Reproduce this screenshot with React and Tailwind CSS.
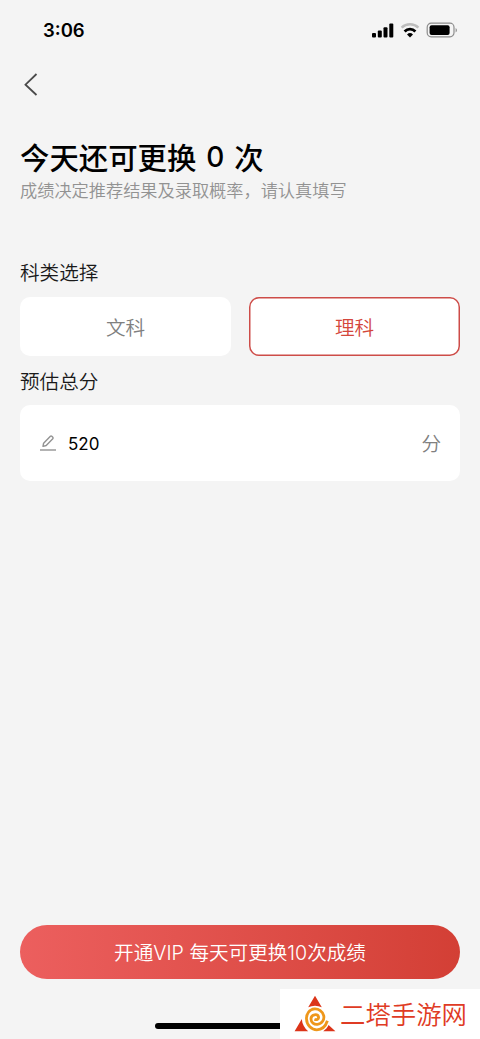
import {useState} from 'react';

// The two subject groups a student can pick from
const SUBJECTS = ["文科", "理科"];

function StatusBar() {
    return (
        <div className="flex h-[60px] items-center justify-between pl-[43px] pr-[22px]">
            <span className="font-['Inter'] text-[18.5px] font-semibold leading-[24px] text-black">3:06</span>
            <svg className="h-[18px] w-[87px]" viewBox="0 0 87 18" fill="none">
                {/* Signal */}
                <g fill="#000">
                    <rect x="1" y="12" width="4" height="4.6" rx="1"/>
                    <rect x="6.8" y="9.4" width="4" height="7.2" rx="1"/>
                    <rect x="12.5" y="6.3" width="4" height="10.3" rx="1"/>
                    <rect x="18.3" y="2.6" width="4" height="14" rx="1"/>
                </g>
                {/* Wifi */}
                <path d="M30.6 6.6a12.2 12.2 0 0 1 16.8 0" stroke="#bdbdbd" strokeWidth="2.5"/>
                <path d="M33.6 10.4a7.7 7.7 0 0 1 10.8 0" stroke="#000" strokeWidth="2.8"/>
                <path d="M36 13.5a4.4 4.4 0 0 1 6 0l-3 3Z" fill="#000"/>
                {/* Battery */}
                <rect x="56.2" y="2.2" width="26.8" height="13.6" rx="4" stroke="#8c8c8c" strokeWidth="1.2"/>
                <rect x="58.6" y="4.2" width="20" height="9.8" rx="2" fill="#000"/>
                <path d="M84.6 7c1.8.7 1.8 3.7 0 4.4Z" fill="#8c8c8c"/>
            </svg>
        </div>
    );
}

function SubjectButton({name, selected, onClick}) {
    return (
        <button
            onClick={onClick}
            className={selected
                ? "h-[59px] rounded-[10px] bg-white text-[19.6px] text-[#d4473c] shadow-[inset_0_0_0_1.5px_#cd4c48]"
                : "h-[59px] rounded-[10px] bg-white text-[19.6px] text-[#808080]"}>
            {name}
        </button>
    );
}

function Watermark() {
    return (
        <div className="absolute bottom-0 right-0 flex h-[50px] w-[200px] items-center bg-white pl-[14px]">
            <svg className="h-[38px] w-[42px] shrink-0" viewBox="0 0 42 38" fill="none">
                <path d="M21 .8l6.8 11.4c-4.4-2-9.2-2-13.6 0Z" fill="#dc3419"/>
                <path d="M7.8 24c.4 5.2 2.600 9 6.400 12.300H.6Z" fill="#dc3419"/>
                <path d="M34.600 30.100l6.800 6.200H29.200c2.500-1.700 4.200-3.700 5.400-6.200Z" fill="#dc3419"/>
                <path
                    d="M20.400 24.300C22.800 25.400 25 24 24.500 21.900C23.700 18.600 17.200 18.900 17 23.800C16.900 27.600 20.200 29.600 23.400 29.300C28 28.900 30.600 24.600 29.700 20.600C28.700 16.200 24.600 13.700 20.600 13.900C15.200 14.300 12.300 19 12.500 24C12.800 30.400 17.600 34.800 22.800 34.800C27.800 34.800 31.600 31.400 33.400 25.800"
                    stroke="#ee971b" strokeWidth="2.800"/>
            </svg>
            <span className="mb-[2px] ml-[4px] whitespace-nowrap text-[25.400px] leading-[36px] text-[#df3b24]">二塔手游网</span>
        </div>
    );
}

function App() {

    // Currently picked subject and estimated score
    const [subject, setSubject] = useState("理科");
    const [score, setScore] = useState("520");

    return (
        <div
            className="relative flex h-[1039px] w-[480px] flex-col overflow-hidden bg-[#f4f4f4] font-['Noto_Sans_CJK_SC',sans-serif] font-[350]">
            <StatusBar/>

            <button className="ml-[23px] mt-[12px] h-[25px] w-[16px]" aria-label="返回">
                <svg className="h-[25px] w-[16px]" viewBox="0 0 16 25" fill="none">
                    <path d="M13.500 2L2.500 12.700L13.500 23" stroke="#4a4a4a" strokeWidth="1.800"/>
                </svg>
            </button>

            <main className="flex flex-1 flex-col px-[20px] pt-[39px]">
                <h1 className="flex h-[40px] whitespace-pre text-[29.400px] font-medium leading-[40px] text-black">
                    今天还可更换
                    <span className="w-[38px] pt-px text-center font-['Inter'] text-[28px] font-medium">0</span>
                    次
                </h1>
                <p className="mt-px whitespace-nowrap text-[17.200px] leading-[26px] text-[#929292]">成绩决定推荐结果及录取概率，请认真填写</p>

                <h2 className="mt-[54px] text-[19.600px] font-[350] leading-[30px] text-[#1a1a1a]">科类选择</h2>
                <div className="mt-[10px] grid grid-cols-2 gap-[18px]">
                    {SUBJECTS.map((name) => (
                        <SubjectButton key={name} name={name} selected={name === subject}
                                       onClick={() => setSubject(name)}/>
                    ))}
                </div>

                <h2 className="mt-[10px] text-[19.600px] font-[350] leading-[30px] text-[#1a1a1a]">预估总分</h2>
                <div className="mt-[9px] flex h-[76px] items-center rounded-[10px] bg-white px-[19px]">
                    <svg className="h-[18px] w-[18px]" viewBox="0 0 18 18" fill="none" stroke="#929292">
                        <path d="M4 12.400l.6-3.200L11.400 2.300a1 1 0 0 1 1.400 0l1 1a1 1 0 0 1 0 1.400L7.200 11.500Z"
                              strokeWidth="1.400" strokeLinejoin="round"/>
                        <path d="M1 16h16" strokeWidth="1.400"/>
                    </svg>
                    <input
                        className="ml-[11px] w-[200px] bg-transparent pt-[3px] font-['Inter'] text-[17px] font-normal text-black focus:outline-none"
                        value={score}
                        onChange={(e) => setScore(e.target.value)}
                    />
                    <span className="ml-auto text-[19.600px] text-[#808080]">分</span>
                </div>

                <button
                    className="mb-[60px] mt-auto h-[54px] whitespace-nowrap rounded-full bg-linear-to-r from-[#ec5f5e] to-[#d33f35] pt-[3px] font-['Inter','Noto_Sans_CJK_SC',sans-serif] text-[19.600px] text-white">
                    开通VIP 每天可更换10次成绩
                </button>
            </main>

            {/* Home indicator */}
            <div className="absolute bottom-[10px] left-[155px] h-[6px] w-[170px] rounded-full bg-black"/>
            <Watermark/>
        </div>
    );
}

export default App;
